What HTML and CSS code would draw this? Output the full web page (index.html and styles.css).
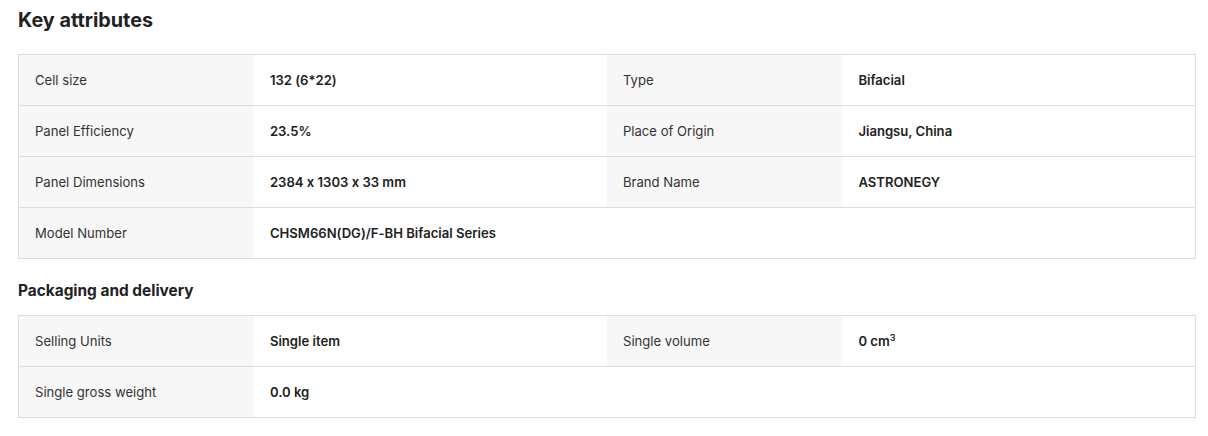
FILE: index.html
```html
<!DOCTYPE html>
<html>
<head>
<meta charset="utf-8">
<link rel="stylesheet" href="styles.css">
</head>
<body>
<div class="page">
  <h2 class="title">Key attributes</h2>
  <table class="attrs">
    <colgroup><col class="c-label"><col class="c-value"><col class="c-label"><col class="c-value"></colgroup>
    <tr><td class="label">Cell size</td><td class="value">132 (6*22)</td><td class="label">Type</td><td class="value">Bifacial</td></tr>
    <tr><td class="label">Panel Efficiency</td><td class="value">23.5%</td><td class="label">Place of Origin</td><td class="value">Jiangsu, China</td></tr>
    <tr><td class="label">Panel Dimensions</td><td class="value">2384 x 1303 x 33 mm</td><td class="label">Brand Name</td><td class="value">ASTRONEGY</td></tr>
    <tr><td class="label">Model Number</td><td class="value">CHSM66N(DG)/F-BH Bifacial Series</td><td></td><td></td></tr>
  </table>
  <h3 class="subtitle">Packaging and delivery</h3>
  <table class="attrs">
    <colgroup><col class="c-label"><col class="c-value"><col class="c-label"><col class="c-value"></colgroup>
    <tr><td class="label">Selling Units</td><td class="value">Single item</td><td class="label">Single volume</td><td class="value">0 cm<sup>3</sup></td></tr>
    <tr><td class="label">Single gross weight</td><td class="value">0.0 kg</td><td></td><td></td></tr>
  </table>
</div>
</body>
</html>
```

FILE: styles.css
```css
html, body {
  margin: 0;
  padding: 0;
  background: #fff;
}
body {
  font-family: Inter, "Noto Sans", sans-serif;
  font-feature-settings: "calt" 0;
  color: #222;
}
.page {
  padding: 6px 12px 0 18px;
}
.title {
  margin: 0 0 20px;
  font-size: 19.8px;
  line-height: 28px;
  font-weight: 700;
  color: #222;
}
.subtitle {
  margin: 20px 0 12px;
  font-size: 15.4px;
  line-height: 24px;
  font-weight: 700;
  color: #222;
}
.attrs {
  width: 1178px;
  border-collapse: collapse;
  border: 1px solid #dddddd;
  table-layout: fixed;
}
.c-label { width: 20%; }
.c-value { width: 30%; }
.attrs tr {
  border-bottom: 1px solid #dddddd;
}
.attrs td {
  height: 50px;
  padding: 0 16px;
  font-size: 13.1px;
  line-height: 20px;
  vertical-align: middle;
}
.label {
  background: #f7f7f7;
  color: #333;
  font-weight: 400;
}
.value {
  color: #222;
  font-weight: 600;
}
sup {
  font-size: 9px;
  line-height: 0;
  vertical-align: 5px;
}
```
